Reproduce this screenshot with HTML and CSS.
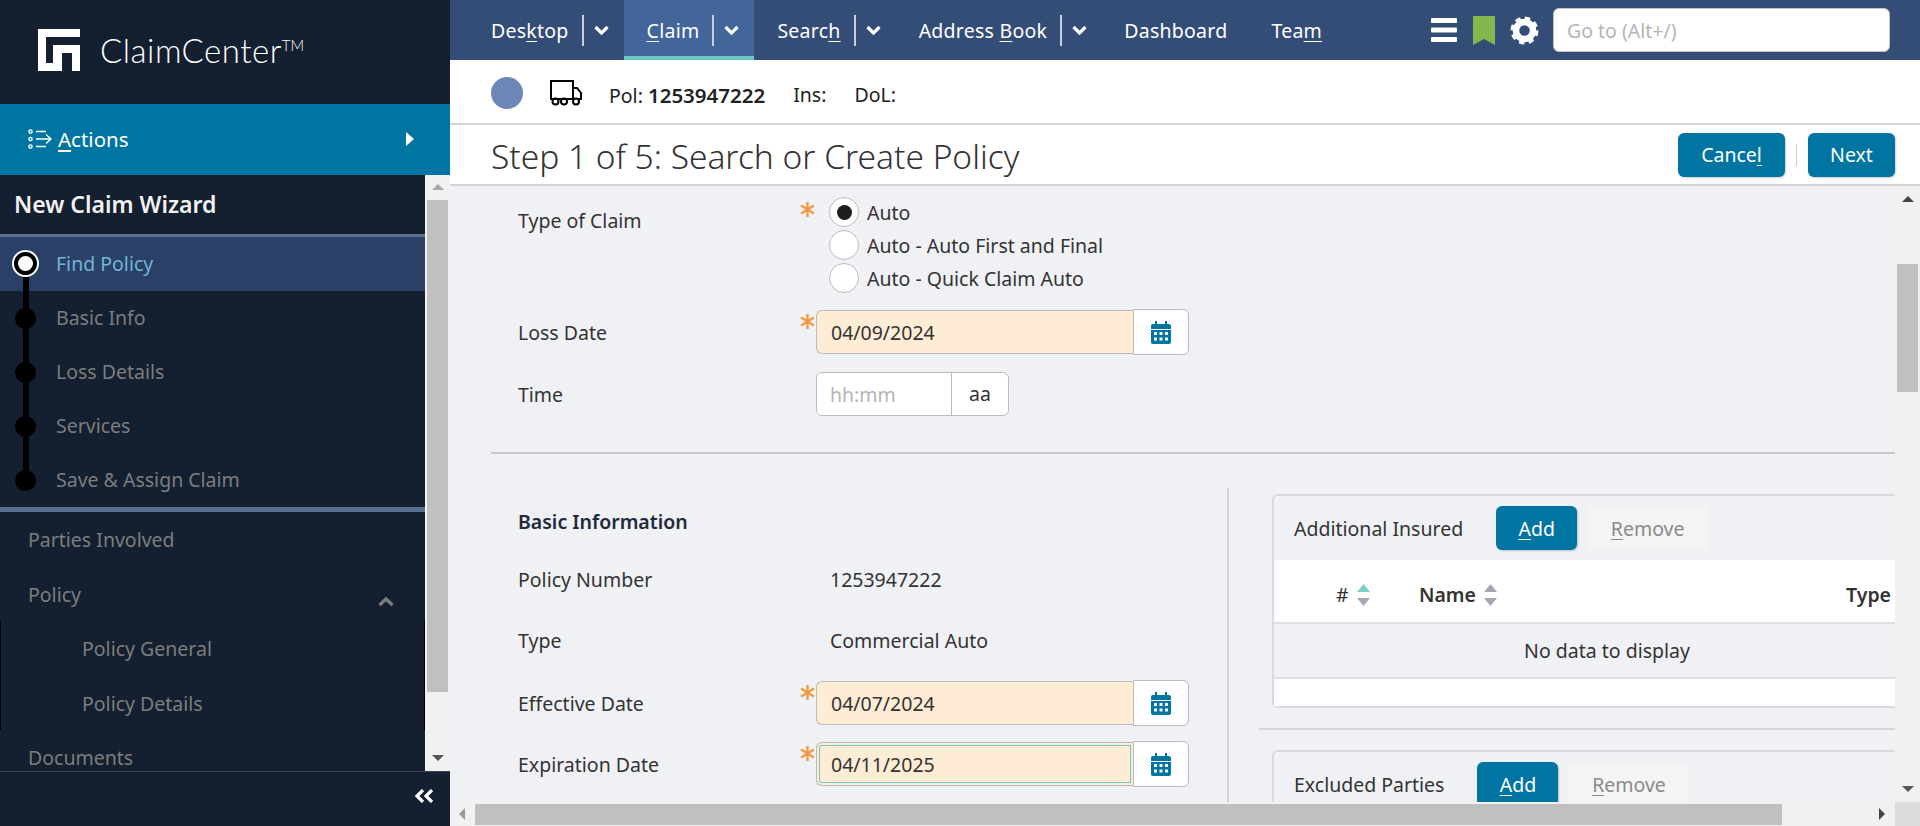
FILE: index.html
```html
<!DOCTYPE html>
<html lang="en">
<head>
    <meta charset="UTF-8">
    <title>ClaimCenter - New Claim Wizard</title>
    <link rel="stylesheet" href="styles.css">
</head>
<body>
<aside class="side">
    <div class="brand">
        <svg class="brand-logo" width="42" height="42" viewBox="0 0 42 42"><path fill="#fff" d="M0 0H42V8H8V34H15V16H42V42H34V24H24V42H0Z"/></svg>
        <span class="brand-name">ClaimCenter<sup>TM</sup></span>
    </div>
    <div class="actions">
        <svg width="24" height="20" viewBox="0 0 24 20" fill="none" stroke="#fff" stroke-width="1.4"><circle cx="2.5" cy="2.5" r="1.6"/><circle cx="2.5" cy="10" r="1.6"/><circle cx="2.5" cy="17.5" r="1.6"/><path d="M8 2.5H18M8 10H23M8 17.5H18M18 5.5L23 10L18 14.5"/></svg>
        <span class="actions-label"><u>A</u>ctions</span>
        <span class="actions-arrow"></span>
    </div>
    <div class="side-body">
        <nav class="side-nav">
            <div class="wizard-title">New Claim Wizard</div>
            <ul class="steps">
                <li class="step current">Find Policy</li>
                <li class="step">Basic Info</li>
                <li class="step">Loss Details</li>
                <li class="step">Services</li>
                <li class="step">Save &amp; Assign Claim</li>
            </ul>
            <div class="menu-item">Parties Involved</div>
            <div class="menu-item">Policy
                <svg class="menu-chevron" width="16" height="11" viewBox="0 0 16 11" fill="none" stroke="#7d7d7d" stroke-width="3.4"><path d="M1.5 9L8 3L14.5 9"/></svg>
            </div>
            <div class="menu-item sub">Policy General</div>
            <div class="menu-item sub">Policy Details</div>
            <div class="menu-item">Documents</div>
        </nav>
        <div class="vbar vbar-side">
            <span class="arrow-up"></span>
            <span class="thumb"></span>
            <span class="arrow-down"></span>
        </div>
    </div>
    <div class="side-foot">
        <svg width="20" height="14" viewBox="0 0 20 14" fill="none" stroke="#fff" stroke-width="3.2"><path d="M9 1L3 7L9 13M18 1L12 7L18 13"/></svg>
    </div>
</aside>

<main class="main">
    <header class="topnav">
        <div class="nav-item has-menu">
            <span>Des<u>k</u>top</span><i class="nav-sep"></i>
            <svg class="nav-chev" width="15" height="11" viewBox="0 0 15 11" fill="none" stroke="#fff" stroke-width="3.2"><path d="M1.5 2L7.5 8L13.5 2"/></svg>
        </div>
        <div class="nav-item has-menu active">
            <span><u>C</u>laim</span><i class="nav-sep"></i>
            <svg class="nav-chev" width="15" height="11" viewBox="0 0 15 11" fill="none" stroke="#fff" stroke-width="3.2"><path d="M1.5 2L7.5 8L13.5 2"/></svg>
        </div>
        <div class="nav-item has-menu">
            <span>Searc<u>h</u></span><i class="nav-sep"></i>
            <svg class="nav-chev" width="15" height="11" viewBox="0 0 15 11" fill="none" stroke="#fff" stroke-width="3.2"><path d="M1.5 2L7.5 8L13.5 2"/></svg>
        </div>
        <div class="nav-item has-menu">
            <span>Address <u>B</u>ook</span><i class="nav-sep"></i>
            <svg class="nav-chev" width="15" height="11" viewBox="0 0 15 11" fill="none" stroke="#fff" stroke-width="3.2"><path d="M1.5 2L7.5 8L13.5 2"/></svg>
        </div>
        <div class="nav-item"><span>Dashboard</span></div>
        <div class="nav-item"><span>Tea<u>m</u></span></div>
        <div class="nav-tools">
            <svg width="26" height="24" viewBox="0 0 26 24" fill="#fff"><rect width="26" height="5" y="0" rx="1"/><rect width="26" height="5" y="9.5" rx="1"/><rect width="26" height="5" y="19" rx="1"/></svg>
            <svg class="tool-mark" width="22" height="29" viewBox="0 0 22 29" fill="#84b84c"><path d="M1 0H21Q22 0 22 1V29L11 23L0 29V1Q0 0 1 0Z"/></svg>
            <svg class="tool-gear" width="29" height="29" viewBox="0 0 29 29" fill="none" stroke="#fff"><circle cx="14.5" cy="14.5" r="8.5" stroke-width="6.5"/><circle cx="14.5" cy="14.5" r="12" stroke-width="4" stroke-dasharray="5.2 4.22"/></svg>
            <input class="goto" type="text" placeholder="Go to (Alt+/)">
        </div>
    </header>

    <div class="infobar">
        <span class="dot"></span>
        <svg class="truck" width="33" height="27" viewBox="0 0 33 27" fill="none" stroke="#000" stroke-width="2"><rect x="2" y="2" width="22" height="18"/><path d="M24 9H28L32 14V20H29"/><circle cx="6.5" cy="22.5" r="3"/><circle cx="15" cy="22.5" r="3"/><circle cx="27" cy="22.5" r="3"/></svg>
        <span class="info-text">Pol: <b>1253947222</b></span>
        <span class="info-text">Ins:</span>
        <span class="info-text">DoL:</span>
    </div>

    <div class="titlebar">
        <h1>Step 1 of 5: Search or Create Policy</h1>
        <button class="btn btn-cancel">Cance<u>l</u></button>
        <i class="title-sep"></i>
        <button class="btn btn-next">Next</button>
    </div>

    <div class="work">
        <div class="pane-row">
            <section class="pane">
                <div class="row row-radio">
                    <label class="row-label">Type of Claim</label>
                    <div class="field">
                        <svg class="req" width="15" height="15" viewBox="0 0 15 15" stroke="#ee9b3f" stroke-width="2.4"><path d="M7.5 0V15M1 3.5L14 11.5M14 3.5L1 11.5"/></svg>
                        <div class="radio-item"><span class="radio checked"></span>Auto</div>
                        <div class="radio-item"><span class="radio"></span>Auto - Auto First and Final</div>
                        <div class="radio-item"><span class="radio"></span>Auto - Quick Claim Auto</div>
                    </div>
                </div>
                <div class="row row-date row-loss">
                    <label class="row-label">Loss Date</label>
                    <div class="field date-field">
                        <svg class="req" width="15" height="15" viewBox="0 0 15 15" stroke="#ee9b3f" stroke-width="2.4"><path d="M7.5 0V15M1 3.5L14 11.5M14 3.5L1 11.5"/></svg>
                        <input class="date-input" type="text" value="04/09/2024">
                        <span class="cal-btn"><svg width="20" height="23" viewBox="0 0 20 23" fill="#0075a1"><path d="M4 0H6V3H14V0H16V3H18Q20 3 20 5V8H0V5Q0 3 2 3H4ZM0 9H20V21Q20 23 18 23H2Q0 23 0 21ZM3 11V14H6V11ZM8.5 11V14H11.5V11ZM14 11V14H17V11ZM3 16.5V19.5H6V16.5ZM8.5 16.5V19.5H11.5V16.5ZM14 16.5V19.5H17V16.5Z" fill-rule="evenodd"/></svg></span>
                    </div>
                </div>
                <div class="row row-time">
                    <label class="row-label">Time</label>
                    <div class="field time-field">
                        <input class="time-input" type="text" placeholder="hh:mm">
                        <span class="time-aa">aa</span>
                    </div>
                </div>
                <hr class="rule">

                <div class="split">
                    <div class="split-left">
                        <h3 class="section-title">Basic Information</h3>
                        <div class="row row-text row-number">
                            <label class="row-label">Policy Number</label>
                            <div class="value">1253947222</div>
                        </div>
                        <div class="row row-text row-type">
                            <label class="row-label">Type</label>
                            <div class="value">Commercial Auto</div>
                        </div>
                        <div class="row row-date row-effective">
                            <label class="row-label">Effective Date</label>
                            <div class="field date-field">
                                <svg class="req" width="15" height="15" viewBox="0 0 15 15" stroke="#ee9b3f" stroke-width="2.4"><path d="M7.5 0V15M1 3.5L14 11.5M14 3.5L1 11.5"/></svg>
                                <input class="date-input" type="text" value="04/07/2024">
                                <span class="cal-btn"><svg width="20" height="23" viewBox="0 0 20 23" fill="#0075a1"><path d="M4 0H6V3H14V0H16V3H18Q20 3 20 5V8H0V5Q0 3 2 3H4ZM0 9H20V21Q20 23 18 23H2Q0 23 0 21ZM3 11V14H6V11ZM8.5 11V14H11.5V11ZM14 11V14H17V11ZM3 16.5V19.5H6V16.5ZM8.5 16.5V19.5H11.5V16.5ZM14 16.5V19.5H17V16.5Z" fill-rule="evenodd"/></svg></span>
                            </div>
                        </div>
                        <div class="row row-date row-expiry">
                            <label class="row-label">Expiration Date</label>
                            <div class="field date-field">
                                <svg class="req" width="15" height="15" viewBox="0 0 15 15" stroke="#ee9b3f" stroke-width="2.4"><path d="M7.5 0V15M1 3.5L14 11.5M14 3.5L1 11.5"/></svg>
                                <input class="date-input focused" type="text" value="04/11/2025">
                                <span class="cal-btn"><svg width="20" height="23" viewBox="0 0 20 23" fill="#0075a1"><path d="M4 0H6V3H14V0H16V3H18Q20 3 20 5V8H0V5Q0 3 2 3H4ZM0 9H20V21Q20 23 18 23H2Q0 23 0 21ZM3 11V14H6V11ZM8.5 11V14H11.5V11ZM14 11V14H17V11ZM3 16.5V19.5H6V16.5ZM8.5 16.5V19.5H11.5V16.5ZM14 16.5V19.5H17V16.5Z" fill-rule="evenodd"/></svg></span>
                            </div>
                        </div>
                    </div>

                    <div class="split-right">
                        <div class="panel">
                            <div class="panel-head">
                                <span class="panel-title">Additional Insured</span>
                                <button class="btn btn-add"><u>A</u>dd</button>
                                <button class="btn btn-remove"><u>R</u>emove</button>
                            </div>
                            <div class="table-head">
                                <span class="th th-num">#
                                    <svg class="sort" width="13" height="22" viewBox="0 0 13 22"><path fill="#7dcdc9" d="M6.5 0L13 8H0Z"/><path fill="#a4a8b5" d="M0 14H13L6.5 22Z"/></svg>
                                </span>
                                <span class="th th-name">Name
                                    <svg class="sort" width="13" height="22" viewBox="0 0 13 22" fill="#a4a8b5"><path d="M6.5 0L13 8H0Z"/><path d="M0 14H13L6.5 22Z"/></svg>
                                </span>
                                <span class="th">Type</span>
                            </div>
                            <div class="table-empty">No data to display</div>
                            <div class="table-foot"></div>
                        </div>
                        <hr class="panel-rule">
                        <div class="panel">
                            <div class="panel-head">
                                <span class="panel-title">Excluded Parties</span>
                                <button class="btn btn-add"><u>A</u>dd</button>
                                <button class="btn btn-remove"><u>R</u>emove</button>
                            </div>
                        </div>
                    </div>
                </div>
            </section>
            <div class="vbar vbar-main">
                <span class="arrow-up"></span>
                <span class="thumb"></span>
                <span class="arrow-down"></span>
            </div>
        </div>
        <div class="hbar">
            <span class="arrow-left"></span>
            <span class="hthumb"></span>
            <span class="arrow-right"></span>
            <span class="hbar-corner"></span>
        </div>
    </div>
</main>
</body>
</html>
```

FILE: styles.css
```css
* {
    box-sizing: border-box;
}
html, body {
    height: 100%;
}
body {
    margin: 0;
    display: flex;
    height: 826px;
    overflow: hidden;
    font-family: "Noto Sans", sans-serif;
    font-size: 19.5px;
    color: #333;
    background: #f0f1f5;
}
u {
    text-underline-offset: 3px;
}

/* left column */
.side {
    width: 450px;
    flex: none;
    display: flex;
    flex-direction: column;
    background: #141f30;
}
.brand {
    height: 104px;
    display: flex;
    align-items: center;
    padding: 0 0 4px 38px;
}
.brand-name {
    margin-left: 20px;
    font-family: Lato, sans-serif;
    font-size: 33px;
    font-weight: 300;
    letter-spacing: 0.5px;
    color: #fff;
}
.brand-name sup {
    font-size: 15px;
    vertical-align: 12px;
    line-height: 0;
    letter-spacing: 0;
}
.actions {
    height: 71px;
    display: flex;
    align-items: center;
    padding: 0 36px 2px 28px;
    background: #0075a1;
    color: #fff;
}
.actions-label {
    margin-left: 6px;
    font-size: 20.5px;
}
.actions-arrow {
    margin-left: auto;
    border-left: 8px solid #fff;
    border-top: 7px solid transparent;
    border-bottom: 7px solid transparent;
}
.side-body {
    flex: 1;
    display: flex;
    min-height: 0;
}
.side-nav {
    flex: 1;
    overflow: hidden;
    color: #7d7d7d;
}
.wizard-title {
    height: 59px;
    padding-left: 14px;
    line-height: 59px;
    font-size: 23px;
    font-weight: 600;
    color: #f2f2f2;
}
.steps {
    list-style: none;
    margin: 0;
    padding: 0;
    border-top: 3px solid #5a6f8f;
    border-bottom: 5px solid #566f93;
}
.step {
    position: relative;
    height: 54px;
    line-height: 54px;
    padding-left: 56px;
}
.step::before {
    content: "";
    position: absolute;
    z-index: 1;
    left: 15px;
    top: 16.5px;
    width: 21px;
    height: 21px;
    border-radius: 50%;
    background: #000;
}
.step::after {
    content: "";
    position: absolute;
    left: 23px;
    top: 27px;
    width: 6px;
    height: 54px;
    background: #000;
}
.step:last-child::after {
    display: none;
}
.step.current {
    background: #2a4066;
    color: #6fb5d8;
}
.step.current::before {
    left: 14px;
    top: 15px;
    width: 15px;
    height: 15px;
    background: #fff;
    border: 4px solid #000;
    box-shadow: 0 0 0 2px #fff;
}
.menu-item {
    position: relative;
    height: 54.5px;
    line-height: 55px;
    padding-left: 28px;
}
.menu-item.sub {
    padding-left: 81px;
    border-left: 1px solid #000;
    border-right: 1px solid #000;
}
.menu-chevron {
    position: absolute;
    right: 31px;
    top: 29px;
}
.side-foot {
    height: 55px;
    display: flex;
    align-items: center;
    justify-content: flex-end;
    padding: 0 16px 6px 0;
    border-top: 1px solid #3a4658;
}

/* fake scrollbars */
.vbar {
    width: 25px;
    flex: none;
    display: flex;
    flex-direction: column;
    align-items: center;
    background: #f1f1f1;
}
.arrow-up {
    margin-top: 9px;
    border-left: 6px solid transparent;
    border-right: 6px solid transparent;
    border-bottom: 6px solid #aaa;
}
.arrow-down {
    margin-top: auto;
    margin-bottom: 10px;
    border-left: 6px solid transparent;
    border-right: 6px solid transparent;
    border-top: 6px solid #555;
}
.thumb {
    width: 21px;
    background: #c0c0c0;
}
.vbar-side .thumb {
    margin-top: 10px;
    height: 492px;
}
.vbar-main .arrow-up {
    margin-top: 10px;
    border-bottom-color: #444;
}
.vbar-main .thumb {
    margin-top: 62px;
    height: 128px;
}
.hbar {
    height: 24px;
    flex: none;
    display: flex;
    align-items: center;
    background: #f1f1f1;
}
.arrow-left {
    margin-left: 9px;
    border-top: 6px solid transparent;
    border-bottom: 6px solid transparent;
    border-right: 6px solid #999;
}
.hthumb {
    margin-left: 10px;
    width: 1307px;
    height: 21px;
    background: #c0c0c0;
}
.arrow-right {
    margin-left: 97px;
    border-top: 6px solid transparent;
    border-bottom: 6px solid transparent;
    border-left: 6px solid #444;
}
.hbar-corner {
    margin-left: auto;
    width: 25px;
    height: 24px;
    background: #dcdcdc;
}

/* top bars */
.main {
    flex: 1;
    min-width: 0;
    display: flex;
    flex-direction: column;
}
.topnav {
    height: 60px;
    flex: none;
    display: flex;
    padding-left: 18px;
    background: #344d76;
    color: #fff;
}
.nav-item {
    display: flex;
    align-items: center;
    padding: 0 22px;
    letter-spacing: 0.25px;
    border-bottom: 4px solid transparent;
    border-top: 4px solid transparent;
}
.nav-item.has-menu {
    padding: 0 15px 0 23px;
}
.nav-item.active {
    background: #42659a;
    border-bottom-color: #6cc9c4;
}
.nav-sep {
    width: 2px;
    height: 31px;
    margin: 0 10px 0 13px;
    background: #c8d0dc;
}
.nav-tools {
    margin-left: auto;
    display: flex;
    align-items: center;
    padding-right: 30px;
}
.tool-mark {
    margin-left: 16px;
}
.tool-gear {
    margin-left: 15px;
}
.goto {
    width: 337px;
    height: 44px;
    margin-left: 14px;
    padding: 0 13px;
    border: 1px solid #c4c4c4;
    border-radius: 6px;
    font: inherit;
    background: #fff;
}
.goto::placeholder, .time-input::placeholder {
    color: #b5b5b5;
    opacity: 1;
}
.infobar {
    height: 65px;
    flex: none;
    display: flex;
    align-items: center;
    padding: 2px 0 0 41px;
    background: #fff;
    border-bottom: 2px solid #d4d4d4;
    color: #222;
}
.dot {
    width: 32px;
    height: 32px;
    border-radius: 50%;
    background: #6d86b5;
}
.truck {
    margin-left: 26px;
}
.info-text {
    margin: 4px 0 0 28px;
}
.truck + .info-text {
    margin-left: 27px;
}
.info-text b {
    font-size: 20.5px;
    font-weight: 600;
}
.titlebar {
    height: 61px;
    flex: none;
    display: flex;
    align-items: center;
    padding: 0 25px 0 41px;
    background: #fff;
    border-bottom: 2px solid #d4d4d4;
}
.titlebar h1 {
    margin: 2px auto 0 0;
    font-size: 33.5px;
    font-weight: 300;
    color: #333;
}
.btn {
    height: 44px;
    padding: 0;
    border: none;
    border-radius: 6px;
    font: inherit;
    color: #fff;
    background: #0075a1;
    box-shadow: 1px 1px 2px rgba(0, 0, 0, 0.2);
}
.btn-cancel {
    width: 107px;
}
.btn-next {
    width: 87px;
}
.title-sep {
    width: 1px;
    height: 22px;
    margin: 0 11px;
    background: #ccc;
}

/* form */
.work {
    flex: 1;
    min-height: 0;
    display: flex;
    flex-direction: column;
}
.pane-row {
    flex: 1;
    min-height: 0;
    display: flex;
}
.pane {
    flex: 1;
    min-width: 0;
    overflow: hidden;
    padding-left: 41px;
}
.row {
    display: flex;
    padding-left: 27px;
}
.row-label {
    width: 298px;
    flex: none;
    align-self: center;
}
.field {
    position: relative;
    flex: none;
}
.req {
    position: absolute;
    left: -16px;
    top: 5px;
}
.row-radio {
    padding-top: 11px;
}
.row-radio .row-label {
    align-self: flex-start;
    padding-top: 10px;
}
.radio-item {
    display: flex;
    align-items: center;
    height: 30px;
    margin: 0 0 3px 13px;
}
.radio {
    width: 30px;
    height: 30px;
    margin-right: 8px;
    border: 1px solid #bbb;
    border-radius: 50%;
    background: #fff;
    display: flex;
    align-items: center;
    justify-content: center;
}
.radio.checked::after {
    content: "";
    width: 15px;
    height: 15px;
    border-radius: 50%;
    background: #1e1e1e;
}
.date-field {
    display: flex;
    align-items: center;
    height: 46px;
}
.date-input {
    width: 317px;
    height: 44px;
    padding: 0 14px;
    border: 1px solid #bbb;
    border-right: none;
    border-radius: 6px 0 0 6px;
    font: inherit;
    color: #333;
    background: #ffecd4;
}
.date-input.focused {
    box-shadow: inset 0 0 0 2px #ffecd4, inset 0 0 0 3px #6cc9c4;
}
.cal-btn {
    width: 56px;
    height: 46px;
    display: flex;
    align-items: center;
    justify-content: center;
    border: 1px solid #bbb;
    border-radius: 0 6px 6px 0;
    background: #fff;
}
.row-loss {
    margin-top: 13px;
}
.row-time {
    margin-top: 17px;
}
.time-field {
    display: flex;
    height: 44px;
    border: 1px solid #bbb;
    border-radius: 6px;
    background: #fff;
    overflow: hidden;
}
.time-input {
    width: 135px;
    padding: 0 13px;
    border: none;
    border-right: 1px solid #bbb;
    font: inherit;
}
.time-aa {
    width: 56px;
    line-height: 42px;
    text-align: center;
}
.rule {
    margin: 36px 0 0;
    height: 2px;
    border: none;
    background: #c8c8c8;
}
.split {
    display: flex;
    margin-top: 34px;
}
.split-left {
    width: 736px;
    flex: none;
}
.section-title {
    margin: 20px 0 0 27px;
    height: 28px;
    line-height: 28px;
    font-size: 19.5px;
    font-weight: 600;
    color: #1f2a3c;
}
.row-text {
    height: 28px;
    line-height: 28px;
}
.value {
    padding-left: 14px;
}
.row-number {
    margin-top: 30px;
}
.row-type {
    margin-top: 33px;
}
.row-effective {
    margin-top: 25px;
}
.row-expiry {
    margin-top: 15px;
}
.split-right {
    flex: 1;
    min-width: 0;
    padding-top: 6px;
    border-left: 2px solid #d4d4d4;
}
.panel {
    width: 670px;
    margin-left: 43px;
    border: 2px solid #d8dade;
    border-radius: 6px;
}
.panel-head {
    display: flex;
    align-items: center;
    height: 64px;
    padding-left: 20px;
}
.panel-title {
    margin-right: 33px;
}
.btn-add {
    width: 81px;
}
.btn-remove {
    width: 121px;
    margin-left: 10px;
    background: #f4f4f4;
    color: #8a8a8a;
    box-shadow: none;
}
.table-head {
    height: 64px;
    display: flex;
    align-items: center;
    padding: 7px 0 0 62px;
    background: #fff;
    border-bottom: 2px solid #dcdfe3;
    font-weight: 600;
}
.th {
    display: flex;
    align-items: center;
}
.th-num {
    width: 83px;
    font-weight: 400;
}
.th-name {
    width: 427px;
}
.sort {
    margin-left: 8px;
}
.table-empty {
    height: 55px;
    line-height: 53px;
    text-align: center;
    border-bottom: 2px solid #dcdfe3;
}
.table-foot {
    height: 27px;
    background: #fff;
}
.panel-rule {
    margin: 20px 0 20px 30px;
    height: 2px;
    border: none;
    background: #d4d6da;
}
```
